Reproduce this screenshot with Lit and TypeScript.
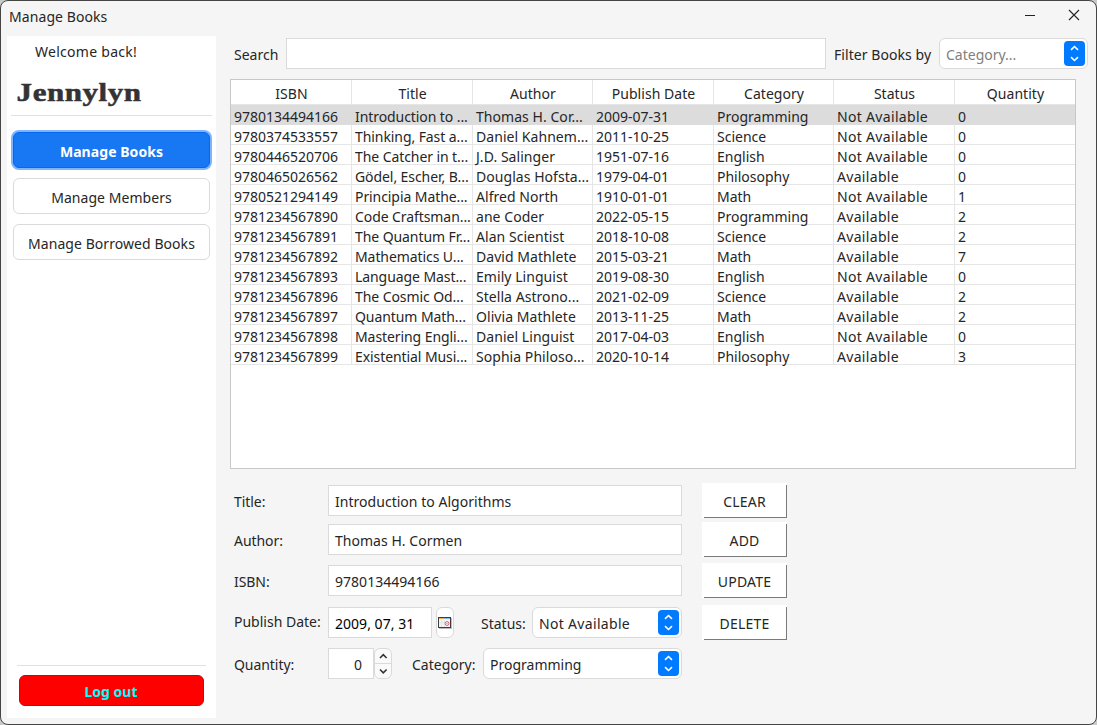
import { LitElement, html, css, svg } from "lit";
import { customElement, property } from "lit/decorators.js";
import { classMap } from "lit/directives/class-map.js";

const COLUMNS = ["ISBN", "Title", "Author", "Publish Date", "Category", "Status", "Quantity"];

const BOOKS: string[][] = [
  ["9780134494166", "Introduction to ...", "Thomas H. Cor...", "2009-07-31", "Programming", "Not Available", "0"],
  ["9780374533557", "Thinking, Fast a...", "Daniel Kahnem...", "2011-10-25", "Science", "Not Available", "0"],
  ["9780446520706", "The Catcher in t...", "J.D. Salinger", "1951-07-16", "English", "Not Available", "0"],
  ["9780465026562", "Gödel, Escher, B...", "Douglas Hofsta...", "1979-04-01", "Philosophy", "Available", "0"],
  ["9780521294149", "Principia Mathe...", "Alfred North", "1910-01-01", "Math", "Not Available", "1"],
  ["9781234567890", "Code Craftsman...", "ane Coder", "2022-05-15", "Programming", "Available", "2"],
  ["9781234567891", "The Quantum Fr...", "Alan Scientist", "2018-10-08", "Science", "Available", "2"],
  ["9781234567892", "Mathematics U...", "David Mathlete", "2015-03-21", "Math", "Available", "7"],
  ["9781234567893", "Language Mast...", "Emily Linguist", "2019-08-30", "English", "Not Available", "0"],
  ["9781234567896", "The Cosmic Od...", "Stella Astrono...", "2021-02-09", "Science", "Available", "2"],
  ["9781234567897", "Quantum Math...", "Olivia Mathlete", "2013-11-25", "Math", "Available", "2"],
  ["9781234567898", "Mastering Engli...", "Daniel Linguist", "2017-04-03", "English", "Not Available", "0"],
  ["9781234567899", "Existential Musi...", "Sophia Philoso...", "2020-10-14", "Philosophy", "Available", "3"],
];

@customElement("combo-box")
export class ComboBox extends LitElement {
  @property() value = "";
  @property({ type: Boolean }) placeholder = false;

  static styles = css`
    :host {
      display: flex;
      align-items: center;
      justify-content: space-between;
      box-sizing: border-box;
      height: 31px;
      border: 1px solid #dadada;
      border-radius: 6px;
      background: #fff;
      padding: 0 2px 0 6px;
    }
    .value { padding-top: 2px; white-space: nowrap; }
    .placeholder { color: #808080; }
    .arrows { width: 21px; height: 25px; border-radius: 4px; background: #007aff; display: block; }
  `;

  render() {
    return html`
      <span class=${classMap({ value: true, placeholder: this.placeholder })}>${this.value}</span>
      <svg class="arrows" viewBox="0 0 21 25" fill="none" stroke="#fff" stroke-width="1.6">
        ${svg`<path d="M7 8.8 10.5 5.5 14 8.8M7 16.2 10.5 19.5 14 16.2" />`}
      </svg>
    `;
  }
}

@customElement("app-root")
export class AppRoot extends LitElement {
  static styles = css`
    :host {
      display: block;
      width: 1097px;
      height: 725px;
      background: #c9c9c9;
      font: 14px/20px "Noto Sans", "Open Sans", sans-serif;
      color: #262626;
    }
    * { box-sizing: border-box; }
    .window {
      width: 1097px;
      height: 725px;
      border: 1px solid #454545;
      border-radius: 8px;
      background: #f5f5f5;
      display: flex;
      flex-direction: column;
      overflow: hidden;
    }
    .titlebar { display: flex; height: 35px; flex: none; padding: 5px 16px 0 8px; justify-content: space-between; }
    .caption { padding-top: 1px; letter-spacing: 0.08px; }
    .controls { display: flex; gap: 32px; padding-top: 3px; }
    .controls svg { display: block; width: 12px; height: 12px; }
    .body { display: flex; padding-left: 6px; }
    .sidebar {
      width: 209px; height: 682px; flex: none; background: #fff;
      display: flex; flex-direction: column; padding: 0 4px 12px;
    }
    .welcome { padding: 6px 0 0 24px; height: 42px; letter-spacing: 0.28px; }
    .name {
      font: bold 25px/30px "Liberation Serif", serif; color: #333;
      transform: scaleX(1.24); transform-origin: 0 0; padding-left: 4.5px;
      -webkit-text-stroke: 0.5px #333; height: 37px; white-space: nowrap; letter-spacing: 0.45px;
    }
    .rule { height: 1px; background: #e1e1e1; flex: none; }
    .nav { display: flex; flex-direction: column; gap: 10px; padding-top: 16px; align-items: center; }
    .nav button, .actions button, .logout { font: inherit; color: inherit; padding: 2px 0 0; margin: 0; }
    .nav button {
      width: 197px; height: 36px; padding-top: 3px; letter-spacing: 0.06px;
      border: 1px solid #dadada; border-radius: 6px; background: #fff;
    }
    .nav .active {
      background: #1877f2; color: #fff; border-color: #0668ee; font-weight: bold;
      box-shadow: 0 0 0 2px #7fb4ff;
    }
    .spacer { flex: 1; }
    .rule.bottom { margin: 0 6px 0 6px; }
    .nav + .spacer + .rule + .logout, .logout {
      margin: 9px 8px 0; padding-right: 1px; height: 31px; border: 1px solid #d90000; border-radius: 6px;
      background: #f00; color: #00ffff; font-weight: bold; flex: none;
    }
    .main { padding-left: 14px; padding-top: 2px; }
    .filters { display: flex; align-items: center; height: 31px; }
    .filters .search-label { width: 56px; padding: 2px 0 0 4px; }
    .filters .filter-label { width: 113px; padding: 2px 0 0 8px; white-space: nowrap; letter-spacing: 0.06px; }
    .filters combo-box { width: 149px; }
    .field {
      display: flex; align-items: center; height: 31px; border: 1px solid #dadada; background: #fff;
      padding: 2px 6px 0;
    }
    .search { width: 540px; }
    .table { margin-top: 10px; width: 846px; height: 390px; border: 1px solid #c8c8c8; background: #fff; }
    .row { display: grid; grid-template-columns: 121px 121px 120px 121px 120px 121px 120px; height: 20px; }
    .cell {
      height: 20px; border: 0 solid #e6e6e6; border-width: 0 1px 1px 0;
      padding: 2px 0 0 3px; white-space: nowrap;
    }
    .row .cell:last-child { border-right: 0; }
    .row .cell:nth-child(2) { letter-spacing: -0.08px; }
    .row .cell:nth-child(3) { letter-spacing: 0.05px; }
    .row .cell:nth-child(6) { letter-spacing: 0.32px; }
    .row.head { height: 25px; }
    .row.head .cell { height: 25px; text-align: center; padding: 4px 0 0 1px; letter-spacing: 0.04px; }
    .selected { background: #dcdcdc; }
    .selected .cell { border-color: #dcdcdc; }
    .editor { display: flex; margin-top: 14px; }
    .form { width: 452px; margin-right: 20px; padding-top: 2px; display: flex; flex-direction: column; }
    .line { display: flex; align-items: center; height: 31px; margin-bottom: 8px; }
    .line.mid { margin-bottom: 10px; }
    .line.low { margin-bottom: 11px; }
    .line .label { width: 98px; padding: 2px 0 0 4px; white-space: nowrap; letter-spacing: -0.06px; }
    .line .label.up { padding: 0 0 2px 4px; letter-spacing: 0; }
    .line .field { width: 354px; letter-spacing: 0.03px; }
    .line .date { width: 104px; color: #000; }
    .line .qty { width: 46px; justify-content: flex-end; padding-right: 11px; }
    .calendar {
      width: 18px; height: 31px; margin-left: 4px; border: 1px solid #dadada; border-radius: 6px; background: #fff;
      display: flex; justify-content: center; padding-top: 9px;
    }
    .calendar svg { width: 14px; height: 12px; display: block; flex: none; }
    .spin { width: 18px; height: 31px; display: block; }
    .status-label { padding: 2px 0 0 27px; width: 78px; white-space: nowrap; }
    .status { width: 150px; letter-spacing: 0.32px; }
    .category-label { padding: 2px 0 0 20px; width: 91px; white-space: nowrap; }
    .category { width: 199px; }
    .actions { display: grid; grid-template-rows: 39px 41px 42px 35px; width: 85px; }
    .actions button {
      width: 85px; height: 35px; border: 0; padding: 3px 0 0; letter-spacing: 0.2px;
      background:
        linear-gradient(#7a7a7a, #7a7a7a) 2px 34px / 83px 1px no-repeat,
        linear-gradient(#7a7a7a, #7a7a7a) 84px 2px / 1px 33px no-repeat,
        #fff;
    }
  `;

  render() {
    return html`
      <div class="window">
        <div class="titlebar">
          <span class="caption">Manage Books</span>
          <div class="controls">
            <svg viewBox="0 0 12 12" stroke="#222"><path d="M1 6.5H11" /></svg>
            <svg viewBox="0 0 12 12" stroke="#222" stroke-width="1.1"><path d="M1 1 11 11M11 1 1 11" /></svg>
          </div>
        </div>
        <div class="body">
          <div class="sidebar">
            <div class="welcome">Welcome back!</div>
            <div class="name">Jennylyn</div>
            <div class="rule"></div>
            <div class="nav">
              <button class="active">Manage Books</button>
              <button>Manage Members</button>
              <button>Manage Borrowed Books</button>
            </div>
            <div class="spacer"></div>
            <div class="rule bottom"></div>
            <button class="logout">Log out</button>
          </div>
          <div class="main">
            <div class="filters">
              <span class="search-label">Search</span>
              <div class="field search"></div>
              <span class="filter-label">Filter Books by</span>
              <combo-box value="Category..." placeholder></combo-box>
            </div>
            <div class="table">
              <div class="row head">${COLUMNS.map((c) => html`<div class="cell">${c}</div>`)}</div>
              ${BOOKS.map(
                (book, i) => html`<div class=${classMap({ row: true, selected: i === 0 })}>
                  ${book.map((value) => html`<div class="cell">${value}</div>`)}
                </div>`
              )}
            </div>
            <div class="editor">
              <div class="form">
                <div class="line"><span class="label">Title:</span><div class="field">Introduction to Algorithms</div></div>
                <div class="line mid"><span class="label">Author:</span><div class="field">Thomas H. Cormen</div></div>
                <div class="line low"><span class="label">ISBN:</span><div class="field">9780134494166</div></div>
                <div class="line mid">
                  <span class="label up">Publish Date:</span>
                  <div class="field date">2009, 07, 31</div>
                  <div class="calendar">
                    <svg viewBox="0 0 14 12">
                      <rect x="1" y="1" width="13" height="11" fill="#bbb" />
                      <rect x="0.5" y="0.5" width="12" height="10" fill="#f4f4f4" stroke="#3c3c46" />
                      <path d="M1 1.5H6" stroke="#f0b050" />
                      <path d="M6 1.5H12" stroke="#8fb4e8" />
                      <path d="M3.5 3V10M6.5 3V10M1 5.5H7" stroke="#ddd" stroke-width=".6" />
                      <circle cx="9" cy="6.5" r="1.9" fill="#fff" stroke="#e05a5a" />
                      <circle cx="9" cy="6.5" r=".6" fill="#e05a5a" />
                    </svg>
                  </div>
                  <span class="status-label">Status:</span>
                  <combo-box class="status" value="Not Available"></combo-box>
                </div>
                <div class="line">
                  <span class="label">Quantity:</span>
                  <div class="field qty">0</div>
                  <svg class="spin" viewBox="0 0 18 31" fill="none">
                    <rect x=".5" y=".5" width="17" height="30" rx="5.5" fill="#fafafa" stroke="#dadada" />
                    <path d="M1 15.5H17" stroke="#dadada" />
                    <path d="M6 10 9.3 6.7 12.6 10M6 21.5 9.3 24.8 12.6 21.5" stroke="#333" stroke-width="1.6" />
                  </svg>
                  <span class="category-label">Category:</span>
                  <combo-box class="category" value="Programming"></combo-box>
                </div>
              </div>
              <div class="actions">
                ${["CLEAR", "ADD", "UPDATE", "DELETE"].map((a) => html`<button>${a}</button>`)}
              </div>
            </div>
          </div>
        </div>
      </div>
    `;
  }
}
